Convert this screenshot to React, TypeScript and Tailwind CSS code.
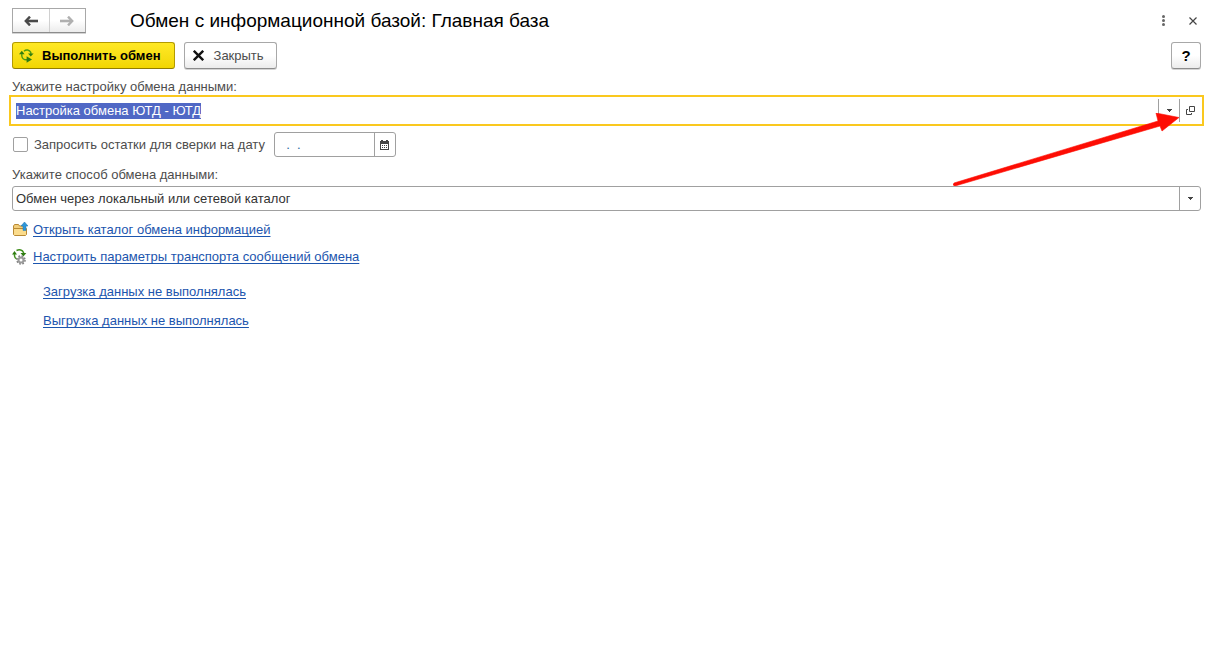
import { useEffect, useRef, type ReactNode } from 'react';
import { clsx } from 'clsx';

const SyncIcon = () => (
  <svg className="h-4 w-4 shrink-0" viewBox="0 0 16 16" aria-hidden="true">
    <path d="M5 3.2C7 1.2 10.4 1.6 11.8 4.4V6" fill="none" stroke="#4c9a10" strokeWidth="1.4" />
    <path d="M9 5.6h5.6L11.8 8.6z" fill="#2f7d12" />
    <path d="M0 6.2h5.6L2.8 2.8z" fill="#2f7d12" />
    <path d="M2.8 6v2c.4 2.4 2.4 4 5.2 3.8" fill="none" stroke="#4c9a10" strokeWidth="1.4" />
    <path d="M7.6 8.2v6.6L13 11.4z" fill="#2f7d12" />
  </svg>
);

const SyncGearIcon = () => (
  <svg className="h-4 w-4 shrink-0" viewBox="0 0 16 16" aria-hidden="true">
    <path d="M4.500 1.500C7.500 .2 10.500 1 11.500 3.500V5" fill="none" stroke="#3f8f1c" strokeWidth="1.500" />
    <path d="M8.500 4h5.800L11.400 7.500z" fill="#2f7d12" />
    <path d="M0 5.500h5L2.500 2z" fill="#2f7d12" />
    <path d="M2.500 5v2c.2 1.500 1 2.500 2.200 3" fill="none" stroke="#3f8f1c" strokeWidth="1.500" />
    <circle cx="9" cy="11" r="4" fill="none" stroke="#858585" strokeWidth="1.600" strokeDasharray="1.700 1.440" />
    <circle cx="9" cy="11" r="2.500" fill="#fff" stroke="#999" strokeWidth="2" />
  </svg>
);

const FolderIcon = () => (
  <svg className="h-4 w-4 shrink-0" viewBox="0 0 16 16" aria-hidden="true">
    <path d="M1.500 6.500V4l1-1.500h4l1 1.500h5v3z" fill="#f3cf7c" stroke="#b98a35" />
    <path d="M1.500 6.500h13v6l-1 1h-11l-1-1z" fill="#fbdc8c" stroke="#b98a35" />
    <path d="M12.500 0L16 4h-2v4.400h-3V4H9z" fill="#2f96d8" stroke="#1d75b5" strokeWidth=".5" />
  </svg>
);

const CalendarIcon = () => (
  <svg className="h-[10px] w-[9px]" viewBox="0 0 9 10" fill="#444" aria-hidden="true">
    <path d="M0 1h1V0h2v1h3V0h2v1h1v9H0zM1 4v5h7V4z" fillRule="evenodd" />
    <path d="M2 5h1v1H2zM4 5h1v1H4zM6 5h1v1H6zM2 7h1v1H2zM4 7h1v1H4zM6 7h1v1H6z" />
  </svg>
);

const OpenIcon = () => (
  <svg className="h-[9px] w-[9px]" viewBox="0 0 9 9" fill="none" stroke="#444" aria-hidden="true">
    <path d="M3.500.5h5v5h-5z" />
    <path d="M2 3.500H.5v5h5V7" />
  </svg>
);

const Caret = () => (
  <svg className="h-[3px] w-[5px]" viewBox="0 0 5 3" shapeRendering="crispEdges" aria-hidden="true">
    <path d="M0 0h5v1H4v1H3v1H2V2H1V1H0z" fill="#444" />
  </svg>
);

const NavArrow = ({ className }: { className: string }) => (
  <svg className={clsx('h-[10px] w-[14px]', className)} viewBox="0 0 14 10" aria-hidden="true">
    <path d="M2 5h12" fill="none" stroke="currentColor" strokeWidth="2.600" />
    <path d="M6 .6L1.800 5 6 9.400" fill="none" stroke="currentColor" strokeWidth="2.400" />
  </svg>
);

// Red pointer that leads to the "open" button of the settings field
const Pointer = () => (
  <svg
    className="pointer-events-none absolute top-[15px] right-[21px] h-[74px] w-[227px]"
    viewBox="0 0 227 74"
    fill="#fd0d04"
    aria-hidden="true"
  >
    <path d="M1 70L205 8L203 0L226 4.500L209 18L207 13L2 73Q-1 72.500 1 70z" stroke="#fd0d04" strokeWidth=".6" />
  </svg>
);

const raised =
  'border border-[#a8a8a8] border-b-[#8c8c8c] bg-linear-to-b from-white from-50% to-[#ececec] shadow-[0_1px_0_#d4d4d4]';

const FieldButton = ({ label, children }: { label: string; children: ReactNode }) => (
  <button
    type="button"
    aria-label={label}
    className="flex w-[21px] shrink-0 items-center justify-center border-l border-[#a0a0a0]"
  >
    {children}
  </button>
);

const TextLink = ({ children }: { children: ReactNode }) => (
  <a
    href="#"
    className="text-[#1c55ae] underline decoration-1 underline-offset-2 [text-decoration-skip-ink:none]"
  >
    {children}
  </a>
);

const App = () => {
  const settingRef = useRef<HTMLInputElement>(null);

  useEffect(() => {
    settingRef.current?.focus();
    settingRef.current?.select();
  }, []);

  return (
    <main className="min-h-screen bg-white pt-2 pr-[17px] pb-4 pl-3 font-['Liberation_Sans',Arial,sans-serif] text-[13px] leading-5 text-[#4d4d4d]">
      <header className="flex h-[25px] items-center">
        <div className={clsx('flex h-full w-[74px] shrink-0', raised)}>
          <button type="button" aria-label="Назад" className="flex flex-1 items-center justify-center">
            <NavArrow className="text-[#4a4a4a]" />
          </button>
          <button
            type="button"
            aria-label="Вперед"
            className="flex flex-1 items-center justify-center border-l border-[#d0d0d0]"
          >
            <NavArrow className="rotate-180 text-[#b0b0b0]" />
          </button>
        </div>
        <h1 className="ml-11 flex-1 text-[19px] text-black">Обмен с информационной базой: Главная база</h1>
        <button type="button" aria-label="Ещё" className="flex w-4 justify-center">
          <svg className="h-[11px] w-[3px]" viewBox="0 0 3 11" fill="#666" aria-hidden="true">
            <circle cx="1.500" cy="1.500" r="1.500" />
            <circle cx="1.500" cy="5.500" r="1.500" />
            <circle cx="1.500" cy="9.500" r="1.500" />
          </svg>
        </button>
        <button type="button" aria-label="Закрыть окно" className="ml-[14px] flex w-4 justify-center">
          <svg className="h-2 w-2" viewBox="0 0 8 8" stroke="#444" strokeWidth="1.200" aria-hidden="true">
            <path d="M.5.5l7 7M7.500.5l-7 7" />
          </svg>
        </button>
      </header>

      <div className="mt-[9px] flex h-[27px] items-stretch">
        <button
          type="button"
          className="flex items-center rounded-[3px] border border-[#b39b00] border-b-[#917d00] bg-linear-to-b from-[#ffe924] to-[#f2d600] pr-[13px] pl-[6px] font-bold text-black"
        >
          <SyncIcon />
          <span className="ml-[7px]">Выполнить обмен</span>
        </button>
        <button type="button" className={clsx('ml-[9px] flex items-center rounded-[3px] pr-3 pl-2', raised)}>
          <svg className="h-[11px] w-[11px]" viewBox="0 0 11 11" stroke="#111" strokeWidth="2.400" aria-hidden="true">
            <path d="M.8.8l9.400 9.400M10.200.8L.8 10.200" />
          </svg>
          <span className="ml-[10px]">Закрыть</span>
        </button>
        <button
          type="button"
          aria-label="Справка"
          className={clsx('ml-auto w-[30px] rounded-[3px] text-[15px] font-bold text-black', raised)}
        >
          ?
        </button>
      </div>

      <label htmlFor="setting" className="mt-2 block">
        Укажите настройку обмена данными:
      </label>
      <div className="relative mt-px flex h-[25px] py-px pr-px outline-2 outline-offset-1 outline-[#fac81e]">
        <input
          id="setting"
          ref={settingRef}
          type="text"
          defaultValue="Настройка обмена ЮТД - ЮТД"
          className="min-w-0 flex-1 pl-1 leading-4 text-[#333] outline-none selection:bg-[#5068c5] selection:text-white"
        />
        <FieldButton label="Выбрать из списка">
          <Caret />
        </FieldButton>
        <FieldButton label="Открыть">
          <OpenIcon />
        </FieldButton>
        <Pointer />
      </div>

      <div className="mt-[9px] flex h-[25px] items-center">
        <input
          id="balances"
          type="checkbox"
          className="ml-px h-[15px] w-[15px] appearance-none rounded-[2px] border border-[#a0a0a0] bg-white checked:bg-[#5068c5]"
        />
        <label htmlFor="balances" className="ml-[6px]">
          Запросить остатки для сверки на дату
        </label>
        <div className="ml-[9px] flex h-full w-[122px] rounded-[3px] border border-[#a0a0a0]">
          <input
            type="text"
            aria-label="Дата сверки"
            defaultValue="  .  ."
            className="min-w-0 flex-1 pl-1 text-[#2b6aa3] outline-none"
          />
          <FieldButton label="Выбрать дату">
            <CalendarIcon />
          </FieldButton>
        </div>
      </div>

      <label htmlFor="method" className="mt-2 block">
        Укажите способ обмена данными:
      </label>
      <div className="relative mt-px flex h-[25px] rounded-[3px] border border-[#a0a0a0]">
        <select id="method" className="min-w-0 flex-1 appearance-none pl-[3px] text-[#333] outline-none">
          <option>Обмен через локальный или сетевой каталог</option>
        </select>
        <span className="pointer-events-none absolute inset-y-0 right-0 flex w-[21px] items-center justify-center border-l border-[#a0a0a0]">
          <Caret />
        </span>
      </div>

      <div className="mt-[9px] flex items-center gap-[5px]">
        <FolderIcon />
        <TextLink>Открыть каталог обмена информацией</TextLink>
      </div>
      <div className="mt-[7px] flex items-center gap-[5px]">
        <SyncGearIcon />
        <TextLink>Настроить параметры транспорта сообщений обмена</TextLink>
      </div>

      <div className="mt-[15px] flex flex-col items-start gap-[9px] pl-[31px]">
        <TextLink>Загрузка данных не выполнялась</TextLink>
        <TextLink>Выгрузка данных не выполнялась</TextLink>
      </div>
    </main>
  );
};

export default App;
